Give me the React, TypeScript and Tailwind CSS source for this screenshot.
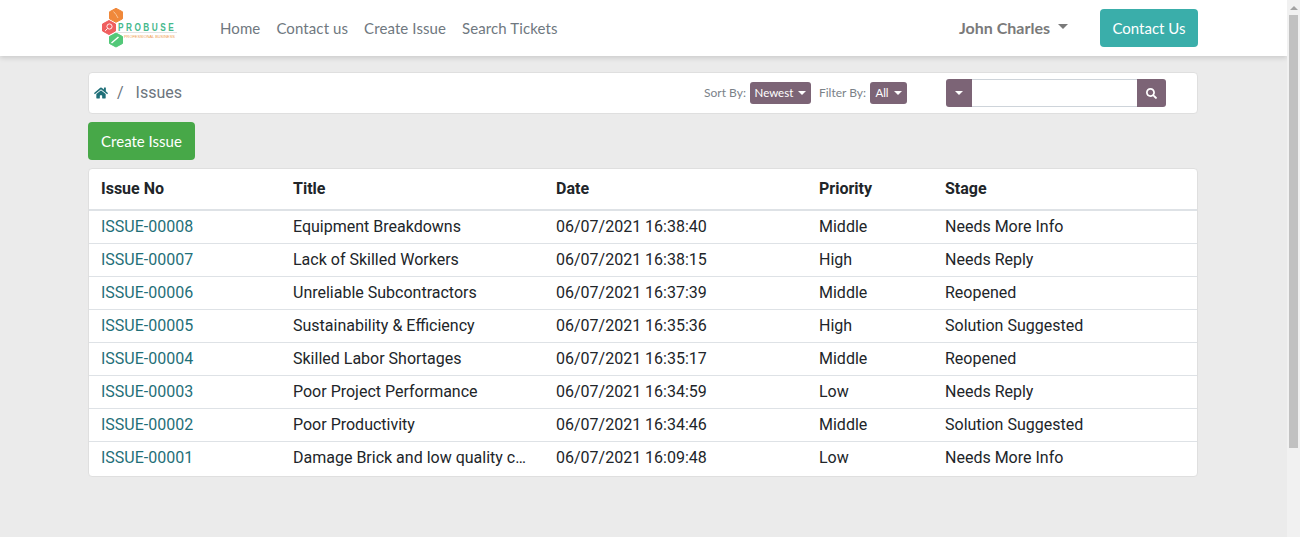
import { FaHome, FaSearch } from "react-icons/fa";

const SANS = "font-['Lato','Noto_Sans',sans-serif]";

const rows = [
  ["ISSUE-00008", "Equipment Breakdowns", "06/07/2021 16:38:40", "Middle", "Needs More Info"],
  ["ISSUE-00007", "Lack of Skilled Workers", "06/07/2021 16:38:15", "High", "Needs Reply"],
  ["ISSUE-00006", "Unreliable Subcontractors", "06/07/2021 16:37:39", "Middle", "Reopened"],
  ["ISSUE-00005", "Sustainability & Efficiency", "06/07/2021 16:35:36", "High", "Solution Suggested"],
  ["ISSUE-00004", "Skilled Labor Shortages", "06/07/2021 16:35:17", "Middle", "Reopened"],
  ["ISSUE-00003", "Poor Project Performance", "06/07/2021 16:34:59", "Low", "Needs Reply"],
  ["ISSUE-00002", "Poor Productivity", "06/07/2021 16:34:46", "Middle", "Solution Suggested"],
  ["ISSUE-00001", "Damage Brick and low quality c…", "06/07/2021 16:09:48", "Low", "Needs More Info"],
];

const GRID = "grid grid-cols-[192px_263px_263px_126px_1fr]";

function Caret({ className = "" }: { className?: string }) {
  return <span className={`inline-block w-0 h-0 border-x-[4px] border-x-transparent border-t-[4px] border-t-white ${className}`} />;
}

function Logo() {
  return (
    <svg width="84" height="46" viewBox="96 5 84 46" className="block">
      <g strokeLinejoin="round" strokeWidth="1">
        <polygon points="116,8.3 122.5,11.8 122.5,18.8 116,22.3 109.5,18.8 109.5,11.8" fill="#f0883a" stroke="#f0883a" />
        <polygon points="109,20.5 115.5,24 115.5,31 109,34.5 102.5,31 102.5,24" fill="#ef5f5f" stroke="#ef5f5f" />
        <polygon points="116,33 122.5,36.5 122.5,43.5 116,47 109.5,43.5 109.5,36.5" fill="#52c878" stroke="#52c878" />
      </g>
      <circle cx="109.5" cy="26.5" r="2.6" fill="none" stroke="#fff" strokeWidth="0.9" />
      <path d="M107.6 28.5l-2.4 2.4" stroke="#fff" strokeWidth="1" />
      <path d="M111.5 43l7-6" stroke="#fff" strokeWidth="1.5" />
      <path d="M113.5 11.5l2.5 3 2 3.5" stroke="#f9c79a" strokeWidth="1" fill="none" />
      <text transform="translate(118 30.7) scale(0.75 1)" x="0" y="0" fontFamily="'Liberation Sans',sans-serif" fontSize="11" fontWeight="700" letterSpacing="3.3" fill="#45b98c">PROBUSE</text>
      <line x1="117" y1="32.5" x2="177" y2="32.5" stroke="#dcdcdc" strokeWidth="0.8" />
      <text x="124" y="37.8" fontFamily="'Liberation Sans',sans-serif" fontSize="3.9" fill="#f0a050">PROFESSIONAL BUSINESS</text>
    </svg>
  );
}

export default function App() {
  return (
    <div className="flex h-[537px] overflow-hidden bg-[#ebebeb] font-['Roboto',sans-serif]">
      <div className="flex-1 min-w-0">
        <header className="h-14 bg-white shadow-[0_2px_5px_rgba(0,0,0,0.14)]">
          <div className="w-[1110px] ml-[88px] h-full flex items-center">
            <div className="ml-[8px] w-[84px]"><Logo /></div>
            <nav className={`ml-[40px] pt-[1px] flex gap-4 text-[15px] tracking-[0.1px] text-[#6f7880] ${SANS}`}>
              <span>Home</span>
              <span>Contact us</span>
              <span>Create Issue</span>
              <span>Search Tickets</span>
            </nav>
            <div className={`ml-auto flex items-center font-bold text-[16px] text-[#7a7a7a] ${SANS}`}>
              John Charles
              <span className="inline-block ml-[8px] mb-[3px] w-0 h-0 border-x-[5px] border-x-transparent border-t-[5px] border-t-[#7a7a7a]" />
            </div>
            <button className={`ml-[32px] w-[98px] h-[38px] pt-[1px] rounded-[4px] bg-[#3aaeaa] text-white text-[15px] ${SANS}`}>Contact Us</button>
          </div>
        </header>

        <main className="w-[1110px] ml-[88px]">
          <div className="mt-4 h-[42px] bg-white border border-[#dfdfdf] rounded-[4px] flex items-center pl-[5px]">
            <FaHome size={14} color="#1f6f78" />
            <span className="ml-[9px] text-[#6c757d] text-[16px]">/</span>
            <span className="ml-[12px] text-[#6c757d] text-[16px]">Issues</span>
            <div className={`ml-auto flex items-center text-[12px] text-[#7b8288] ${SANS}`}>
              <span>Sort By:</span>
              <span className="ml-[4px] w-[61px] h-[22px] rounded-[3px] bg-[#7c6476] text-white text-[11.5px] flex items-center justify-center gap-[5px]">Newest<Caret /></span>
              <span className="ml-[8px]">Filter By:</span>
              <span className="ml-[4px] w-[37px] h-[22px] rounded-[3px] bg-[#7c6476] text-white text-[11.5px] flex items-center justify-center gap-[5px]">All<Caret /></span>
            </div>
            <div className="ml-[39px] mr-[31px] flex h-7">
              <span className="w-[26px] bg-[#7c6476] rounded-l-[3px] flex items-center justify-center"><Caret /></span>
              <span className="w-[165px] bg-white border-y border-[#ced4da]" />
              <span className="w-[29px] bg-[#7c6476] rounded-r-[3px] flex items-center justify-center"><FaSearch size={11} color="#fff" /></span>
            </div>
          </div>

          <button className={`mt-2 block w-[107px] h-[38px] pt-[1px] rounded-[4px] bg-[#47a848] text-white text-[15px] ${SANS}`}>Create Issue</button>

          <div className="mt-2 bg-white border border-[#dfdfdf] rounded-[4px] pb-[2px] text-[16px] text-[#212529]">
            <div className={`${GRID} h-[42px] items-center border-b-2 border-[#dee2e6] font-bold pl-3`}>
              <span>Issue No</span><span>Title</span><span>Date</span><span>Priority</span><span>Stage</span>
            </div>
            {rows.map((r, i) => (
              <div key={r[0]} className={`${GRID} items-center pl-3 ${i ? "h-[33px] border-t border-[#dee2e6]" : "h-[32px] pb-[1px]"}`}>
                <span className="text-[#1f6f78]">{r[0]}</span>
                <span>{r[1]}</span>
                <span>{r[2]}</span>
                <span>{r[3]}</span>
                <span>{r[4]}</span>
              </div>
            ))}
          </div>
        </main>
      </div>

      <aside className="w-[13px] shrink-0 bg-[#f1f1f1] flex flex-col">
        <div className="h-[15px] flex items-center justify-center">
          <span className="w-0 h-0 border-x-[4px] border-x-transparent border-b-[4px] border-b-[#a3a3a3]" />
        </div>
        <div className="h-[433px] mx-[2px] bg-[#c1c1c1]" />
      </aside>
    </div>
  );
}
